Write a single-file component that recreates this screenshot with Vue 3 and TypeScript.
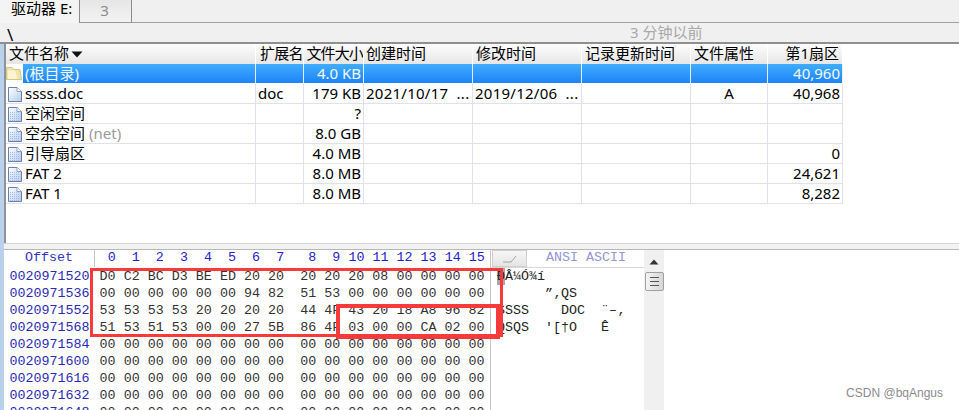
<script setup lang="ts">
interface FileRow {
  name: string
  note?: string
  ext?: string
  size?: string
  created?: string
  modified?: string
  attr?: string
  sector?: string
  icon: 'folder' | 'doc' | 'dots'
  selected?: boolean
}

const headers = ['文件名称', '扩展名', '文件大小', '创建时间', '修改时间', '记录更新时间', '文件属性', '第1扇区']

const files: FileRow[] = [
  { name: '(根目录)', size: '4.0 KB', sector: '40,960', icon: 'folder', selected: true },
  { name: 'ssss.doc', ext: 'doc', size: '179 KB', created: '2021/10/17  ...', modified: '2019/12/06  ...', attr: 'A', sector: '40,968', icon: 'doc' },
  { name: '空闲空间', size: '?', icon: 'dots' },
  { name: '空余空间', note: '(net)', size: '8.0 GB', icon: 'dots' },
  { name: '引导扇区', size: '4.0 MB', sector: '0', icon: 'dots' },
  { name: 'FAT 2', size: '8.0 MB', sector: '24,621', icon: 'dots' },
  { name: 'FAT 1', size: '8.0 MB', sector: '8,282', icon: 'dots' }
]

const zero = '00 00 00 00 00 00 00 00 00 00 00 00 00 00 00 00'
const hexRows: { off: string; hex: string; ascii: string }[] = [
  { off: '0020971520', hex: 'D0 C2 BC D3 BE ED 20 20 20 20 20 08 00 00 00 00', ascii: 'ÐÂ¼Ó¾í' },
  { off: '0020971536', hex: '00 00 00 00 00 00 94 82 51 53 00 00 00 00 00 00', ascii: '      ”‚QS' },
  { off: '0020971552', hex: '53 53 53 53 20 20 20 20 44 4F 43 20 18 A8 96 82', ascii: 'SSSS    DOC  ¨–‚' },
  { off: '0020971568', hex: '51 53 51 53 00 00 27 5B 86 4F 03 00 00 CA 02 00', ascii: "QSQS  '[†O   Ê" },
  { off: '0020971584', hex: zero, ascii: '' },
  { off: '0020971600', hex: zero, ascii: '' },
  { off: '0020971616', hex: zero, ascii: '' },
  { off: '0020971632', hex: zero, ascii: '' },
  { off: '0020971648', hex: zero, ascii: '' }
]

const columns = Array.from({ length: 16 }, (_, i) => String(i))
</script>

<template>
  <div class="app">
    <div class="tabs">
      <div class="tab active">驱动器 E:</div>
      <div class="tab idle">3</div>
      <div class="tab-rest"></div>
    </div>
    <div class="path">
      <span class="path-text">\</span>
      <span class="path-time">3 分钟以前</span>
    </div>

    <div class="lower">
      <div class="list-area">
        <div class="grid head">
          <div v-for="(h, i) in headers" :key="h" class="hcell" :class="{ right: i === 7 }">
            {{ h }}<svg v-if="i === 0" class="sort" width="12" height="7" viewBox="0 0 12 7"><path d="M0.5 0.5H11.5L6 6.5Z" fill="#111" /></svg>
          </div>
        </div>
        <div v-for="(f, idx) in files" :key="f.name" class="grid row" :class="{ selected: f.selected }">
          <div class="cell name">
            <svg v-if="f.icon === 'folder'" class="icon" width="16" height="16" viewBox="0 0 16 16">
              <path d="M0.5 2.5H6L7.5 4.5H14L15.5 14.5H0.5Z" fill="#efe5a8" stroke="#cfc48c" />
              <path d="M2 5.5H9L11.5 14H2Z" fill="#faf5d0" />
            </svg>
            <svg v-else class="icon" width="16" height="16" viewBox="0 0 16 16">
              <defs>
                <linearGradient :id="`g-${idx}`" x1="0" y1="0" x2="1" y2="1">
                  <stop offset="0" stop-color="#ffffff" />
                  <stop offset="1" stop-color="#b4ccf0" />
                </linearGradient>
                <pattern :id="`p-${idx}`" width="2" height="2" patternUnits="userSpaceOnUse">
                  <rect width="1" height="1" fill="#9fb8e6" />
                </pattern>
              </defs>
              <path d="M2.5 1.5H11L15.5 5.5V15.5H2.5Z" :fill="`url(#g-${idx})`" stroke="#6c7fa8" />
              <path v-if="f.icon === 'dots'" d="M3.5 6H14.5V15H3.5Z" :fill="`url(#p-${idx})`" />
              <path d="M11 1.5V5.5H15.5" fill="#fff" stroke="#8fa3c8" />
            </svg>
            <span>{{ f.name }}</span><span v-if="f.note" class="note">{{ f.note }}</span>
          </div>
          <div class="cell ext">{{ f.ext }}</div>
          <div class="cell right">{{ f.size }}</div>
          <div class="cell date">{{ f.created }}</div>
          <div class="cell date">{{ f.modified }}</div>
          <div class="cell"></div>
          <div class="cell center">{{ f.attr }}</div>
          <div class="cell right">{{ f.sector }}</div>
        </div>
      </div>

      <div class="splitter"></div>

      <div class="hex-area">
        <div class="hex-main">
          <div class="hex-head">
            <div class="off-head">Offset</div>
            <div class="bytes head-bytes">
              <span v-for="c in columns" :key="c">{{ c }}</span>
            </div>
          </div>
          <div v-for="r in hexRows" :key="r.off" class="hex-row">
            <div class="off">{{ r.off }}</div>
            <div class="bytes">
              <span v-for="(b, i) in r.hex.split(' ')" :key="i">{{ b }}</span>
            </div>
          </div>
        </div>
        <div class="ascii-col">
          <div class="ascii-head">
            <div class="ascii-btn">
              <svg width="14" height="8" viewBox="0 0 14 8"><path d="M0 7H8L13 1" fill="none" stroke="#a4a4a4" /></svg>
            </div>
            <div class="ascii-title">ANSI ASCII</div>
          </div>
          <div v-for="(r, i) in hexRows" :key="r.off" class="ascii-row"><span v-if="i === 0" class="cursor">{{ r.ascii[0] }}</span><span>{{ i === 0 ? r.ascii.slice(1) : r.ascii }}</span></div>
        </div>
        <div class="scroll">
          <svg class="arrow" width="10" height="6" viewBox="0 0 10 6"><path d="M0.5 5.5L5 0.5L9.5 5.5Z" fill="#333" /></svg>
          <div class="thumb">
            <i></i><i></i><i></i>
          </div>
        </div>
        <div class="hex-rest"></div>
      </div>
    </div>

    <div class="mark box-a"></div>
    <div class="mark box-b"></div>
    <div class="watermark">CSDN @bqAngus</div>
  </div>
</template>

<style>
html, body { margin: 0; background: #fff; }
</style>

<style scoped>
.app {
  position: relative;
  width: 959px;
  height: 410px;
  overflow: hidden;
  background: #fff;
  color: #000;
  font-family: "Noto Sans", "Noto Sans CJK SC", sans-serif;
  font-size: 15px;
}
.tabs {
  display: flex;
  height: 23px;
  background: #f0f0f0;
}
.tab { box-sizing: border-box; line-height: 17px; }
.active {
  width: 80px;
  padding-left: 11px;
  border-right: 1px solid #8c8c8c;
  background: #f4f4f4;
}
.idle {
  width: 52px;
  text-align: center;
  color: #8a8a8a;
  line-height: 21px;
  border-right: 1px solid #8c8c8c;
  border-bottom: 1px solid #9a9a9a;
  background: linear-gradient(#e6e6e6, #f3f3f3);
  padding-right: 2px;
}
.tab-rest { flex: 1; border-bottom: 1px solid #a0a0a0; }
.path {
  position: relative;
  height: 19px;
  background: #f0f0f0;
  border-bottom: 2px solid #8f8f8f;
  line-height: 19px;
}
.path-text { position: absolute; left: 7px; top: 2px; font-size: 17px; }
.path-time { position: absolute; left: 630px; top: 0; color: #a8a8a8; }
.lower {
  padding-left: 4px;
  background: #b9d1ea;
}
.list-area {
  height: 199px;
  border-left: 2px solid #8f9296;
  box-sizing: border-box;
  background: #fff;
}
.grid {
  display: grid;
  grid-template-columns: 250px 48px 60px 109px 109px 109px 77px 75px;
  width: 837px;
}
.head { height: 20px; }
.hcell {
  box-sizing: border-box;
  height: 20px;
  line-height: 19px;
  padding-left: 3px;
  white-space: nowrap;
  overflow: hidden;
  border-right: 1px solid #fff;
  background: linear-gradient(#fdfdfd, #e6e6e6);
}
.hcell:nth-child(2) { padding-left: 4px; letter-spacing: -0.8px; }
.hcell:nth-child(3) { padding-left: 2.5px; letter-spacing: -0.9px; }
.hcell:nth-child(4) { padding-left: 2px; }
.hcell.right { text-align: right; padding-right: 3px; }
.sort { margin-left: 2px; vertical-align: 1px; }
.row { height: 20px; }
.cell {
  box-sizing: border-box;
  height: 20px;
  line-height: 19px;
  border-right: 1px solid #e0e0f0;
  border-bottom: 1px solid #e0e0f0;
  white-space: pre;
  overflow: hidden;
}
.name { display: flex; align-items: flex-start; }
.icon { flex: none; margin: 2px 3px 0 0; }
.note { margin-left: 4px; color: #9a9a9a; }
.ext { padding-left: 2px; }
.date { padding-left: 2px; letter-spacing: 0.25px; }
.right { text-align: right; padding-right: 2px; }
.center { text-align: center; }
.selected .cell {
  color: #f4f8ff;
  background: linear-gradient(#40adff, #1e84f6);
  border-right-color: #e6eefc;
  border-bottom-color: #fff;
}
.selected .name { background: #fff; }
.selected .name span { background: linear-gradient(#40adff, #1e84f6); height: 19px; flex: 1; margin-left: -2px; padding-left: 2px; }
.selected .icon { margin-top: 1px; }
.splitter {
  box-sizing: border-box;
  height: 7px;
  background: #f2f2f2;
  border-top: 1px solid #d6d6d6;
  border-bottom: 1px solid #b8b8b8;
}
.hex-area {
  display: flex;
  height: 160px;
  background: #fff;
  font-family: "Liberation Mono", monospace;
  font-size: 13.33px;
}
.hex-main { flex: none; width: 486px; border-right: 1px solid #c8c8c8; color: #333; }
.hex-head { display: flex; height: 18px; line-height: 16px; color: #2222cc; }
.off-head {
  box-sizing: border-box;
  width: 92px;
  padding-left: 21px;
  border-right: 1px solid #c8c8c8;
  color: #3333bb;
  height: 17px;
}
.hex-row { display: flex; height: 17px; line-height: 17px; }
.off { width: 92px; padding-left: 5.5px; box-sizing: border-box; color: #2a2ab4; }
.bytes {
  display: grid;
  width: 394px;
  grid-template-columns: repeat(8, 16px) 0 repeat(8, 16px);
  column-gap: 8.07px;
  padding-left: 4.4px;
}
.bytes span:nth-child(9) { grid-column: 10; }
.head-bytes span { text-align: right; }
.ascii-col { width: 153px; flex: none; color: #222; }
.ascii-head { display: flex; height: 18px; border-bottom: 1px solid #d8d8d8; box-sizing: border-box; }
.ascii-btn {
  box-sizing: border-box;
  width: 35px;
  height: 17px;
  margin-left: 1px;
  display: flex;
  align-items: center;
  justify-content: center;
  background: linear-gradient(#f6f6f6, #e4e4e4);
  border: 1px solid #d0d0d0;
}
.ascii-title { margin-left: 19px; color: #9494d8; line-height: 16px; }
.ascii-row { height: 17px; line-height: 17px; padding-left: 6px; white-space: pre; }
.cursor { display: inline-block; width: 8px; background: #a8a8a8; }
.scroll {
  width: 20px;
  flex: none;
  background: #f0f0f0;
  display: flex;
  flex-direction: column;
  align-items: center;
}
.hex-rest { flex: 1; }
.arrow { margin-top: 9px; }
.thumb {
  box-sizing: border-box;
  width: 19px;
  height: 19px;
  margin-top: 7px;
  border: 1px solid #a0a0a0;
  border-radius: 2px;
  background: linear-gradient(90deg, #f4f4f4, #d6d6d6);
  display: flex;
  flex-direction: column;
  align-items: center;
  justify-content: center;
  gap: 3px;
}
.thumb i { display: block; width: 9px; height: 1px; background: #555; }
.mark { position: absolute; box-sizing: border-box; pointer-events: none; }
.box-a { left: 90px; top: 268px; width: 413px; height: 69px; border: 3px solid #f83a3a; }
.box-b { left: 336px; top: 304px; width: 164px; height: 35px; border: 4px solid #f83a3a; }
.watermark {
  position: absolute;
  right: 16px;
  top: 385px;
  color: #8c8c8c;
  font-family: "Liberation Sans", sans-serif;
  font-size: 12px;
  line-height: 16px;
}
</style>
